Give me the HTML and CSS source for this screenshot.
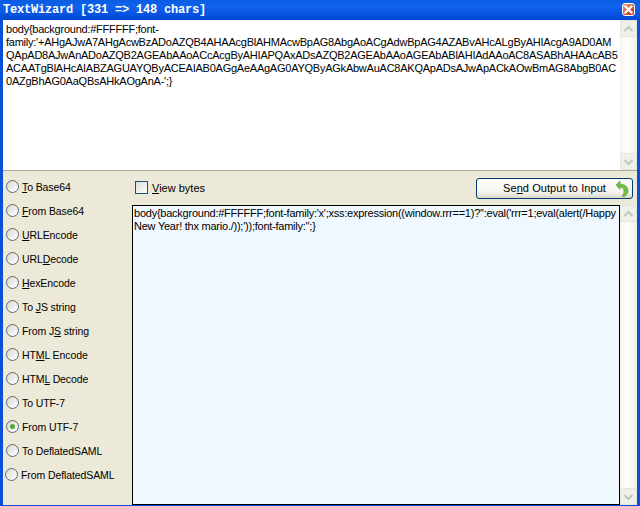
FILE: index.html
```html
<!DOCTYPE html>
<html lang="en">
<head>
<meta charset="utf-8">
<title>TextWizard</title>
<link rel="stylesheet" href="styles.css">
</head>
<body>
<div class="window">
  <header class="titlebar">
    <span class="title">TextWizard [331 =&gt; 148 chars]</span>
    <span class="close"><svg width="11" height="11" viewBox="0 0 11 11"><path d="M2.500 2.500l6 6M8.500 2.500l-6 6" stroke="#fff" stroke-width="2.2" stroke-linecap="square"/></svg></span>
  </header>
  <div class="body">
    <section class="input">
      <div class="input-text">body{background:#FFFFFF;font-<br>family:'+AHgAJwA7AHgAcwBzADoAZQB4AHAAcgBlAHMAcwBpAG8AbgAoACgAdwBpAG4AZABvAHcALgByAHIAcgA9AD0AM<br>QApAD8AJwAnADoAZQB2AGEAbAAoACcAcgByAHIAPQAxADsAZQB2AGEAbAAoAGEAbABlAHIAdAAoAC8ASABhAHAAcAB5<br>ACAATgBlAHcAIABZAGUAYQByACEAIAB0AGgAeAAgAG0AYQByAGkAbwAuAC8AKQApADsAJwApACkAOwBmAG8AbgB0AC<br>0AZgBhAG0AaQBsAHkAOgAnA-';}</div>
      <div class="scrollbar">
        <span class="arrow"><svg width="11" height="8" viewBox="0 0 11 8"><path d="M1.500 6l4-4 4 4" fill="none" stroke="#c3c8bd" stroke-width="2"/></svg></span>
        <span class="arrow"><svg width="11" height="8" viewBox="0 0 11 8"><path d="M1.500 2l4 4 4-4" fill="none" stroke="#c3c8bd" stroke-width="2"/></svg></span>
      </div>
    </section>
    <section class="panel">
      <ul class="radios">
        <li class="radio"><span class="dot"></span><span><u>T</u>o Base64</span></li>
        <li class="radio"><span class="dot"></span><span><u>F</u>rom Base64</span></li>
        <li class="radio"><span class="dot"></span><span><u>U</u>RLEncode</span></li>
        <li class="radio"><span class="dot"></span><span>URL<u>D</u>ecode</span></li>
        <li class="radio"><span class="dot"></span><span><u>H</u>exEncode</span></li>
        <li class="radio"><span class="dot"></span><span>To <u>J</u>S string</span></li>
        <li class="radio"><span class="dot"></span><span>From J<u>S</u> string</span></li>
        <li class="radio"><span class="dot"></span><span>HT<u>M</u>L Encode</span></li>
        <li class="radio"><span class="dot"></span><span>HTM<u>L</u> Decode</span></li>
        <li class="radio"><span class="dot"></span><span>To UTF-7</span></li>
        <li class="radio"><span class="dot on"></span><span>From UTF-7</span></li>
        <li class="radio"><span class="dot"></span><span>To DeflatedSAML</span></li>
        <li class="radio last"><span class="dot"></span><span>From DeflatedSAML</span></li>
      </ul>
      <div class="main">
        <div class="toolbar">
          <label class="check"><span class="box"></span><span><u>V</u>iew bytes</span></label>
          <button class="send"><span class="send-label">Se<u>n</u>d Output to Input</span>
            <svg class="send-icon" width="14" height="18" viewBox="0 0 14 18"><path d="M5 1L1 5 5 9.500V7c2.500.3 4 1.800 4 4 0 2-.8 4-2 5.500h2.500C11.800 15 13 13 13 10.500 13 7 10 4.300 5 4z" fill="#74bd45" stroke="#4f9e33" stroke-width=".6"/></svg>
          </button>
        </div>
        <div class="output">
          <div class="output-text">body{background:#FFFFFF;font-family:'x';xss:expression((window.rrr==1)?'':eval('rrr=1;eval(alert(/Happy<br>New Year! thx mario./));'));font-family:'';}</div>
          <div class="scrollbar">
            <span class="arrow"><svg width="11" height="8" viewBox="0 0 11 8"><path d="M1.500 6l4-4 4 4" fill="none" stroke="#c3c8bd" stroke-width="2"/></svg></span>
            <span class="arrow"><svg width="11" height="8" viewBox="0 0 11 8"><path d="M1.500 2l4 4 4-4" fill="none" stroke="#c3c8bd" stroke-width="2"/></svg></span>
          </div>
        </div>
      </div>
    </section>
  </div>
</div>
</body>
</html>
```
FILE: styles.css
```css
* { box-sizing: border-box; }
html, body { margin: 0; padding: 0; }
body { width: 640px; height: 506px; overflow: hidden; font-family: "Liberation Sans", Arial, sans-serif; font-size: 10.5px; letter-spacing: -.1px; color: #000; }
.window { width: 640px; height: 506px; display: flex; flex-direction: column; background: #0a4fd8; }
.titlebar { height: 20px; flex: none; display: flex; align-items: center; justify-content: space-between; padding: 0 5px 0 3px; background: linear-gradient(#0a5ce0, #0f63ec 30%, #0654e2 70%, #0348d0); }
.title { font-family: "Liberation Mono", monospace; font-weight: 700; font-size: 12px; letter-spacing: -.2px; color: #fff; }
.close { width: 13px; height: 13px; margin-top: -1px; background: linear-gradient(135deg, #e8a48c, #d8502c 60%, #c63a1c); border: 1px solid #fff; border-radius: 3px; display: flex; }
.body { flex: 1; min-height: 0; margin: 0 3px 1px 3px; display: flex; flex-direction: column; }
.input { height: 151px; flex: none; display: flex; background: #fff; border-bottom: 1px solid #aca899; }
.input-text { flex: 1; min-width: 0; padding: 3px 3px; font-size: 11px; letter-spacing: -.24px; line-height: 13px; white-space: nowrap; overflow: hidden; }
.scrollbar { width: 17px; flex: none; display: flex; flex-direction: column; justify-content: space-between; background: linear-gradient(90deg, #f5f4ee, #fefefb 40%, #f1efe6); }
.arrow { width: 17px; height: 17px; display: flex; align-items: center; justify-content: center; background: #eef0e9; border: 1px solid #e4e6dc; border-radius: 2px; }
.panel { flex: 1; min-height: 0; display: flex; background: #ece9d8; }
.radios { list-style: none; margin: 0; padding: 9px 0 0 3px; width: 129px; flex: none; display: flex; flex-direction: column; gap: 11px; }
.radio { height: 13px; display: flex; align-items: center; gap: 3px; white-space: nowrap; }
.radio.last { margin-left: -1px; }
.dot { width: 13px; height: 13px; flex: none; border: 1.5px solid #566c84; border-radius: 50%; background: linear-gradient(135deg, #dcd9cb, #fff); display: flex; align-items: center; justify-content: center; }
.dot.on::after { content: ""; width: 5px; height: 5px; border-radius: 50%; background: #4ea83f; }
.main { flex: 1; min-width: 0; display: flex; flex-direction: column; }
.toolbar { height: 34px; flex: none; display: flex; align-items: flex-start; justify-content: space-between; padding: 7px 0 0 3px; }
.check { display: flex; align-items: center; gap: 4px; margin-top: 3px; font-size: 11px; letter-spacing: 0; }
.box { width: 13px; height: 13px; border: 1px solid #1c5180; background: linear-gradient(135deg, #dcdcd7, #fff); }
.send { width: 157px; height: 21px; margin-right: 4px; padding: 0 3px 0 0; display: flex; align-items: center; justify-content: flex-end; gap: 9px; font: inherit; letter-spacing: inherit; color: #000; border: 1px solid #003c74; border-radius: 3px; background: linear-gradient(#fff, #f4f3ee 70%, #dcd8ce); }
.send-label { font-size: 11px; letter-spacing: .07px; position: relative; top: -1px; }
.send-icon { flex: none; }
.output { flex: 1; min-height: 0; display: flex; }
.output-text { flex: 1; min-width: 0; padding: 1px 1px; font-size: 11px; letter-spacing: -.24px; line-height: 13px; white-space: nowrap; overflow: hidden; background: #f0f8ff; border: 1px solid #000; }
```
